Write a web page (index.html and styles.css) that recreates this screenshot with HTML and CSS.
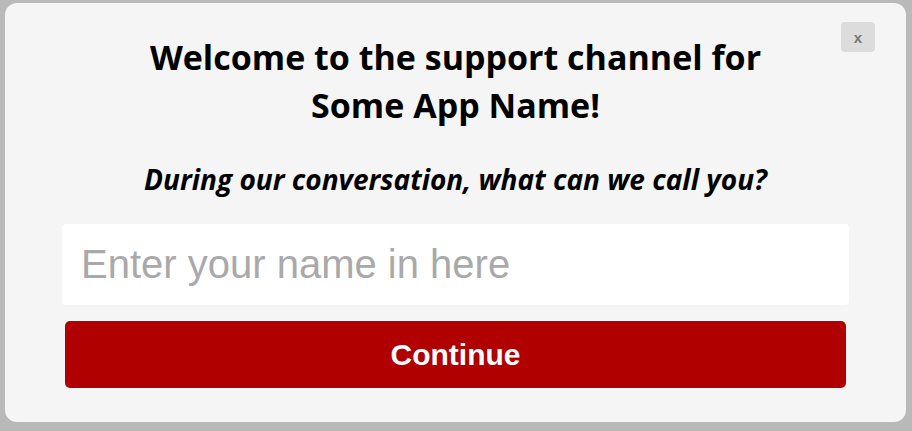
FILE: index.html
```html
<!DOCTYPE html>
<html lang="en">
<head>
<meta charset="utf-8">
<title>Support</title>
<link rel="stylesheet" href="styles.css">
</head>
<body>
<div class="panel">
  <button class="close" type="button">x</button>
  <h1 class="title">Welcome to the support channel for<br>Some App Name!</h1>
  <p class="subtitle">During our conversation, what can we call you?</p>
  <input class="name" type="text" placeholder="Enter your name in here">
  <button class="continue" type="button">Continue</button>
</div>
</body>
</html>
```
FILE: styles.css
```css
html, body {
  margin: 0;
  height: 100%;
}
body {
  background: #b9b9b9;
  padding: 3px 6px 9px 5px;
  box-sizing: border-box;
  display: flex;
}
.panel {
  position: relative;
  flex: 1;
  background: #f5f5f5;
  border-radius: 12px;
  display: flex;
  flex-direction: column;
  align-items: center;
  padding: 30px 57px 0 57px;
}
.close {
  position: absolute;
  top: 19px;
  right: 31px;
  width: 34px;
  height: 30px;
  border: none;
  border-radius: 4px;
  background: #dcdcdc;
  color: #777;
  font: bold 15px "Liberation Sans", Arial, sans-serif;
  padding: 0;
}
.title {
  margin: 0;
  font: bold 34px/48px "Open Sans", sans-serif;
  color: #000;
  text-align: center;
}
.subtitle {
  margin: 34px 0 0 0;
  font: italic bold 28px/32px "Open Sans", sans-serif;
  color: #000;
  text-align: center;
}
.name {
  margin-top: 29px;
  align-self: stretch;
  height: 81px;
  box-sizing: border-box;
  border: none;
  border-radius: 4px;
  background: #fff;
  padding: 0 19px;
  font: 40px "Liberation Sans", Arial, sans-serif;
  color: #333;
  outline: none;
}
.name::placeholder {
  color: #a9a9a9;
}
.continue {
  margin-top: 16px;
  align-self: stretch;
  margin-left: 3px;
  margin-right: 3px;
  height: 67px;
  border: none;
  border-radius: 5px;
  background: #b00000;
  color: #fff;
  font: bold 30px "Liberation Sans", Arial, sans-serif;
}
```
